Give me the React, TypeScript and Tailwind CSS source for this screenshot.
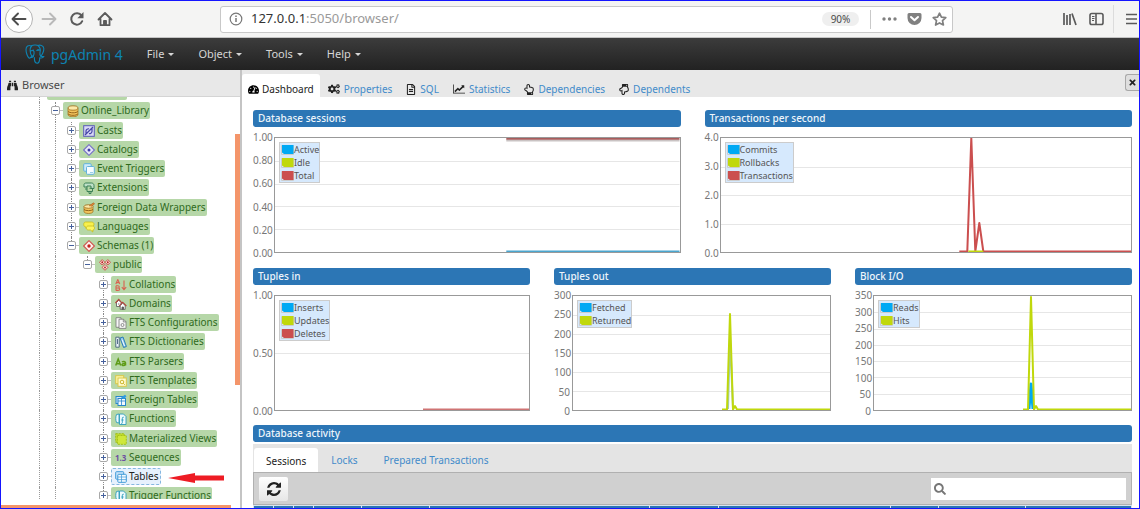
import React from "react";
import { FaBinoculars, FaTachometerAlt, FaCogs, FaRegFileAlt, FaRegHandPointUp, FaRegHandPointDown, FaSearch, FaTimes } from "react-icons/fa";

/* ---------- Browser chrome ---------- */

function ArrowIcon({ flip = false }: { flip?: boolean }) {
  return (
    <svg viewBox="0 0 16 16" className={flip ? "h-4 w-4 -scale-x-100" : "h-4 w-4"} fill="none" stroke="currentColor" strokeWidth="1.900" strokeLinecap="round" strokeLinejoin="round">
      <path d="M14.500 8H2M7 2.500 1.500 8 7 13.500" />
    </svg>
  );
}

function ReloadIcon() {
  return (
    <svg viewBox="0 0 16 16" className="h-4 w-4" fill="none" stroke="currentColor" strokeWidth="2">
      <path d="M13.200 10.200A5.700 5.700 0 1 1 12.600 4.600" strokeLinecap="round" />
      <path d="M14.500 1v6.200H8.300z" fill="currentColor" stroke="none" />
    </svg>
  );
}

function HomeIcon() {
  return (
    <svg viewBox="0 0 16 16" className="h-4 w-4" fill="none" stroke="currentColor" strokeWidth="1.8" strokeLinecap="round" strokeLinejoin="round">
      <path d="M1.500 8.500 8 2l6.500 6.500M3.500 8v6.200h9V8" />
      <path d="M6.600 14V9.500h2.800V14z" fill="currentColor" strokeWidth="1" />
    </svg>
  );
}

function BrowserBar() {
  return (
    <header className="flex h-[37px] shrink-0 items-center border-b border-[#c4c4c4] bg-[#f4f4f3] text-[#5b5b5b]">
      <div className="flex w-[219px] shrink-0 items-center pl-1">
        <button aria-label="Back" className="flex h-7 w-7 items-center justify-center rounded-full border border-[#b4b4b4] bg-white text-[#4d4d4d]"><ArrowIcon /></button>
        <button aria-label="Forward" className="ml-2 text-[#b9b9b9]"><ArrowIcon flip /></button>
        <button aria-label="Reload" className="ml-3"><ReloadIcon /></button>
        <button aria-label="Home" className="ml-3"><HomeIcon /></button>
      </div>
      <div className="flex h-[27px] min-w-0 flex-1 items-center rounded-[3px] border border-[#c8c8c8] bg-white pr-[5px] pl-2">
        <svg viewBox="0 0 14 14" className="h-[14px] w-[14px] shrink-0" fill="none" stroke="#777" strokeWidth="1.200">
          <circle cx="7" cy="7" r="5.800" />
          <path d="M7 6v4M7 3.600v1.300" strokeWidth="1.500" />
        </svg>
        <div className="ml-2 flex-1 text-[13px] whitespace-nowrap text-[#9a9a9a]"><span className="text-[#333]">127.0.0.1</span>:5050/browser/</div>
        <button className="h-[14px] w-[37px] rounded-full bg-[#efefef] text-[10px] leading-[14px] text-[#4a4a4a]">90%</button>
        <div className="ml-[11px] h-[19px] w-px bg-[#c9c9c9]" />
        <button aria-label="Page actions" className="ml-[11px]">
          <svg viewBox="0 0 15 14" className="h-[14px] w-[15px]" fill="#808080"><circle cx="2" cy="7" r="1.700" /><circle cx="7.500" cy="7" r="1.700" /><circle cx="13" cy="7" r="1.700" /></svg>
        </button>
        <button aria-label="Save to Pocket" className="ml-[10px]">
          <svg viewBox="0 0 15 14" className="h-[14px] w-[15px]"><path d="M2 1h11a1.500 1.500 0 0 1 1.500 1.500V6a7 7 0 0 1-14 0V2.500A1.500 1.500 0 0 1 2 1z" fill="#808080" /><path d="M4 5l3.500 3.300L11 5" fill="none" stroke="#fff" strokeWidth="2" strokeLinecap="round" strokeLinejoin="round" /></svg>
        </button>
        <button aria-label="Bookmark" className="ml-[10px]">
          <svg viewBox="0 0 15 14" className="h-[14px] w-[15px]" fill="none" stroke="#808080" strokeWidth="1.700" strokeLinejoin="round"><path d="M7.500 1.200l1.900 4 4.400.5-3.300 3 .9 4.300-3.900-2.100L3.600 13l.9-4.300-3.300-3 4.400-.5z" /></svg>
        </button>
      </div>
      <div className="flex h-full w-[186px] shrink-0 items-center justify-end text-[#5a5a5a]">
        <button aria-label="Library">
          <svg viewBox="0 0 15 14" className="h-[14px] w-[15px]" fill="none" stroke="currentColor" strokeWidth="1.700"><path d="M2 1v12M5 3v10M8 2v11M10 1.500l4 11.500" /></svg>
        </button>
        <button aria-label="Sidebars" className="ml-3">
          <svg viewBox="0 0 15 14" className="h-[14px] w-[15px]" fill="none" stroke="currentColor" strokeWidth="1.600"><rect x="1" y="1.500" width="13" height="11" rx="1.800" /><path d="M7 1.500v11" /><path d="M3 4.500h2.500M3 6.500h2.500M3 8.500h2" strokeWidth="1" /></svg>
        </button>
        <div className="ml-[9px] h-7 w-px bg-[#dcdcdc]" />
        <button aria-label="Menu" className="mr-[2px] ml-[11px]">
          <svg viewBox="0 0 12 14" className="h-[14px] w-3" stroke="currentColor" strokeWidth="1.700"><path d="M1 2.500h11M1 7h11M1 11.500h11" /></svg>
        </button>
      </div>
    </header>
  );
}

/* ---------- Application menu ---------- */

function ElephantLogo() {
  return (
    <svg viewBox="0 0 20 20" className="h-5 w-5" fill="none" stroke="currentColor" strokeWidth="1.100" strokeLinecap="round" strokeLinejoin="round">
      <path d="M6.500 2C3.500.7 1 2 1 5.500c0 3 1.500 7.500 3 8.500 1 .6 2-.8 2.800-1.800" />
      <path d="M6.500 2C8 1 11.500.7 13 1.500c2-.8 5.500-.3 5.800 3 .2 2.500-1.300 5.500-2.800 7.800 1 .5 2 .3 3 .2-1 1.300-3 1.600-4.300 1.200-.2 2.300.2 5.300-2.500 5.500-2.500.1-2.700-2-2.900-5.700" />
      <path d="M6.500 2C5 3.500 5 6 5.300 8c.2 2 .6 4 3.200 4.500M13 1.500c2 2 2.800 4.500 2 6.800-.4 1.300-.1 2.700 1 4M5.300 7.500c1-1.300 3-1.300 3.700 0 .4 1.500-.2 3.500-.8 5-.6.900-1.700 1-2.200.8M11.800 6.500c.8-.8 2.200-.7 3.300-.2" />
      <path d="M8 6.200h.3M13 6h.3" strokeWidth="1.400" />
    </svg>
  );
}

function MenuBar() {
  return (
    <nav className="flex h-8 shrink-0 items-center bg-linear-to-b from-[#3c3c3c] to-[#222] pl-6 text-[11px] text-[#d6d6d6]">
      <a href="#home" className="mr-3 flex items-center gap-[6px] text-[14px] text-[#0d83b2]"><ElephantLogo />pgAdmin 4</a>
      {["File", "Object", "Tools", "Help"].map((m) => (
        <button key={m} className="flex items-center gap-1 px-3">
          {m}
          <svg viewBox="0 0 6 3" className="h-[3px] w-[6px]" fill="currentColor"><path d="M0 0h6L3 3z" /></svg>
        </button>
      ))}
    </nav>
  );
}

/* ---------- Object tree ---------- */

const icon = {
  database: <g><path d="M1 3.500v6c0 1.300 2.200 2.300 5 2.300s5-1 5-2.300v-6z" fill="#f3c55d" stroke="#9c6a18" strokeWidth=".7" /><ellipse cx="6" cy="3" rx="5" ry="2.200" fill="#fbe9a9" stroke="#9c6a18" strokeWidth=".8" /><path d="M1 6.300c1.500 2 8.500 2 10 0M1 8.800c1.500 2 8.500 2 10 0" fill="none" stroke="#8a5a14" strokeWidth=".9" /></g>,
  cast: <g><rect x=".7" y=".7" width="10.600" height="10.600" fill="#d9d9f6" stroke="#5a5ab8" strokeWidth="1" /><path d="M3 8.500V5.800a2.500 2.500 0 0 1 3-2M9 3.500v3a2.500 2.500 0 0 1-3 2M2 10l8-8" fill="none" stroke="#4646a8" strokeWidth="1.200" /></g>,
  catalog: <g><path d="M6 .6 11.400 6 6 11.400.6 6z" fill="#e7e6fa" stroke="#7873c6" strokeWidth="1.100" /><circle cx="6" cy="6" r="1.500" fill="#3c3ca5" /></g>,
  event: <g><rect x=".7" y=".7" width="7.500" height="7.500" rx="1" fill="#cfeaf8" stroke="#62b2dc" /><rect x="3.500" y="3.500" width="7.800" height="7.800" rx="1" fill="#f7fcff" stroke="#62b2dc" /><path d="M7 9.500h3" stroke="#9bcde6" /></g>,
  extension: <g fill="none" stroke="#3d8157" strokeWidth="1"><path d="M1 5V2.500C1 1.500 2 1 3 1h5.500C10 1 11 2.200 11 3.500v3H8V4H4v1z" fill="#bfe0c8" /><path d="M4 5v4.500h5.500V6.300H6.500M6 9.500v2h2v-2M4 7H2" /></g>,
  wrapper: <g><path d="M1 4.500v5c0 1.200 2 2 4.500 2s4.500-.8 4.500-2v-5z" fill="#f3c55d" stroke="#9c6a18" strokeWidth=".7" /><ellipse cx="5.500" cy="4.500" rx="4.500" ry="1.800" fill="#fbe9a9" stroke="#9c6a18" strokeWidth=".8" /><path d="M1 7.500c1.500 1.500 7.500 1.500 9 0" fill="none" stroke="#8a5a14" strokeWidth=".9" /><path d="M6 4 10.500.800 11.500 2 8 4.500" fill="#e48b3a" stroke="#a85a18" strokeWidth=".6" /></g>,
  language: <g><path d="M2.500 1h6C10 1 11 2 11 3.200S10 6 8.500 6H5L3 7.500V6C1.500 5.800.7 5 .7 3.500S1.500 1 2.500 1z" fill="#f8f04c" stroke="#c6bb1d" strokeWidth=".8" /><path d="M5 5h4.500c1.200 0 2 .8 2 2s-.7 2-1.700 2v2L7.500 9H5.300C4 9 3.300 8 3.300 7S4 5 5 5z" fill="#fcf65f" stroke="#c6bb1d" strokeWidth=".8" /></g>,
  schema: <g><path d="M6 .6 11.400 6 6 11.400.6 6z" fill="#fff1ef" stroke="#cf5750" strokeWidth="1.100" /><circle cx="6" cy="6" r="1.700" fill="#c5201c" /></g>,
  public: <g fill="#fbe3e1" stroke="#cb4540" strokeWidth=".9"><path d="M3.200.6 5.900 3.300 3.200 6 .5 3.300zM8.800.6l2.700 2.700L8.800 6 6.100 3.300zM6 5.500 8.900 8.400 6 11.300 3.100 8.400z" /><path d="M3.200 3.200v.2M8.800 3.200v.2M6 8.300v.2" stroke="#b81e1a" strokeWidth="1.800" strokeLinecap="round" /></g>,
  collation: <g fill="none" stroke="#d9604f" strokeWidth="1.100"><path d="M.8 5 2.800.6 4.800 5M1.500 3.600h2.600M1 6.800v4.600M1 6.800h1.800c2 0 2 2.200 0 2.200H1h2c2.300 0 2.300 2.400 0 2.400H1M9 1.500v9M6.800 8.200 9 10.600l2.200-2.400" /></g>,
  domain: <g strokeWidth=".8" stroke="#555"><path d="M1.500 4.500V8.500H6V4.500L3.800 2.200z" fill="#fff" /><path d="M.4 5 3.800 1.400 7 5" fill="none" stroke="#b4433c" strokeWidth="1.100" /><path d="M5.200 7.500v3.800h5V7.500L7.700 5.200z" fill="#fff" /><path d="M4.200 8 7.700 4.200 11.400 8" fill="none" stroke="#b4433c" strokeWidth="1.100" /><path d="M7 9h1.500v2.300H7zM3 6h1.400" fill="#666" /></g>,
  config: <g stroke="#777" strokeWidth=".8" fill="#f7f7f7"><path d="M1 .700h5v9.600H1z" /><path d="M4 2.200h4.500l2.500 2.500v6.700H4z" /><circle cx="7.500" cy="8" r="1.500" fill="none" /><path d="M8.300 2.200v2.700H11" fill="none" /></g>,
  dictionary: <g strokeWidth=".9"><path d="M.8 1.200h3.400v10H.8z" fill="#eef5fb" stroke="#44617c" /><path d="M2.500 3v5" stroke="#44617c" /><path d="m5 2 3-1 3.400 9.500-2.800 1z" fill="#8fc7ee" stroke="#2476b1" /><path d="m7 3.500 2.500 6.500" stroke="#fff" /></g>,
  parser: <g fill="none" stroke="#5d9b16" strokeWidth="1.500"><path d="M.7 9.500 3.200 3l2.500 6.500M1.500 7.700h3.400M7 6c1-.9 3.500-.9 3.500.8v2.700M10.500 7.500c-2-.1-3.500.1-3.500 1.100 0 1.300 2.500 1.200 3.500 0" /></g>,
  template: <g><rect x=".7" y=".7" width="8" height="8" fill="#fdf7a8" stroke="#d9c748" /><rect x="3" y="3" width="8.300" height="8.300" fill="#fffbd0" stroke="#d9c748" /><circle cx="7" cy="7" r="1.800" fill="none" stroke="#cdb62d" /><path d="m8.300 8.300 1.500 1.500" stroke="#cdb62d" /></g>,
  foreign: <g><rect x="1" y="2.500" width="7.500" height="7" fill="#cfe7fb" stroke="#2887cb" /><rect x="3" y="4.500" width="7.500" height="7" fill="#f2f9ff" stroke="#2887cb" /><path d="M3 7h7.500M6.500 4.500v7" stroke="#2887cb" strokeWidth=".8" /><path d="M6 3.500 10 .700l1.500 1.500L9 5z" fill="#2f9be2" /></g>,
  func: <g fill="#eefafd" stroke="#2d9cbc" strokeWidth=".9"><path d="M1.500 1.500C.5 4 .5 7 1.500 9.500L4 10V1z" /><path d="M4.500 1h4L11 3.500v8H4.500z" /><path d="M8.800 4.300c-1.300-.5-1.500.2-1.500 1.500v4c0 .8-.8 1-1.300.7M6.300 7h2.300" fill="none" /></g>,
  mview: <g><rect x=".7" y=".7" width="8.500" height="8.500" fill="#c2dd2f" stroke="#9fbd16" strokeDasharray="2 1" /><rect x="2.500" y="2.500" width="8.800" height="8.800" fill="#cfe83a" stroke="#a5c31a" strokeDasharray="2 1" /></g>,
  table: <g><rect x=".7" y=".7" width="8" height="7.500" rx=".8" fill="#c8e3fa" stroke="#3f9ad8" /><rect x="2.800" y="3.300" width="8.500" height="8" rx=".8" fill="#f4faff" stroke="#3f9ad8" /><path d="M2.800 6h8.500M2.800 8.600h8.500M6.500 3.300v8" stroke="#3f9ad8" strokeWidth=".7" /></g>,
};

type IconName = keyof typeof icon | "sequence";
type Guide = "line" | "none";
interface Node { label: string; icon: IconName; guides: Guide[]; open?: boolean; last?: boolean; selected?: boolean }

const rootGuides: Guide[] = ["line"];
const databaseGuides: Guide[] = ["line", "line"];
const schemaGuides: Guide[] = ["line", "line", "none"];
const objectGuides: Guide[] = ["line", "line", "none", "none"];

const nodes: Node[] = [
  { label: "Online_Library", icon: "database", guides: rootGuides, open: true },
  { label: "Casts", icon: "cast", guides: databaseGuides },
  { label: "Catalogs", icon: "catalog", guides: databaseGuides },
  { label: "Event Triggers", icon: "event", guides: databaseGuides },
  { label: "Extensions", icon: "extension", guides: databaseGuides },
  { label: "Foreign Data Wrappers", icon: "wrapper", guides: databaseGuides },
  { label: "Languages", icon: "language", guides: databaseGuides },
  { label: "Schemas (1)", icon: "schema", guides: databaseGuides, open: true, last: true },
  { label: "public", icon: "public", guides: schemaGuides, open: true, last: true },
  { label: "Collations", icon: "collation", guides: objectGuides },
  { label: "Domains", icon: "domain", guides: objectGuides },
  { label: "FTS Configurations", icon: "config", guides: objectGuides },
  { label: "FTS Dictionaries", icon: "dictionary", guides: objectGuides },
  { label: "FTS Parsers", icon: "parser", guides: objectGuides },
  { label: "FTS Templates", icon: "template", guides: objectGuides },
  { label: "Foreign Tables", icon: "foreign", guides: objectGuides },
  { label: "Functions", icon: "func", guides: objectGuides },
  { label: "Materialized Views", icon: "mview", guides: objectGuides },
  { label: "Sequences", icon: "sequence", guides: objectGuides },
  { label: "Tables", icon: "table", guides: objectGuides, selected: true },
  { label: "Trigger Functions", icon: "func", guides: objectGuides },
];

function GuideCell({ kind }: { kind: Guide }) {
  return <span className={kind === "line" ? "ml-2 w-2 shrink-0 border-l border-dotted border-[#9a9a9a]" : "w-4 shrink-0"} />;
}

function TreeRow({ node }: { node: Node }) {
  return (
    <li className="flex h-[19px] pl-[30px] nth-[4n+1]:h-5">
      {node.guides.map((g, i) => <GuideCell key={i} kind={g} />)}
      <span className="relative w-4 shrink-0">
        <span className={node.last ? "absolute top-0 left-2 h-2 border-l border-dotted border-[#8a8a8a]" : "absolute inset-y-0 left-2 border-l border-dotted border-[#8a8a8a]"} />
        <span className="absolute top-2 right-0 w-1 border-t border-[#c0c0c0]" />
        <button aria-label={node.open ? `Collapse ${node.label}` : `Expand ${node.label}`} className="absolute top-1 left-1 flex h-[9px] w-[9px] items-center justify-center rounded-[2px] border border-[#a8a8a8] bg-white">
          <svg viewBox="0 0 5 5" className="h-[5px] w-[5px] shrink-0" stroke="#46619c" strokeWidth="1"><path d={node.open ? "M0 2.500h5" : "M0 2.500h5M2.500 0v5"} /></svg>
        </button>
      </span>
      <a href="#node" className={node.selected
        ? "flex h-[17px] items-center gap-[2px] rounded-[2px] border border-dashed border-[#86b7e0] bg-[#e7f1fd] pr-px pl-[3px] text-[10px] whitespace-nowrap text-[#222]"
        : "flex h-[17px] items-center gap-[2px] rounded-[2px] bg-[#b6d7a8] pr-px pl-1 text-[10px] whitespace-nowrap text-[#2f6a1c]"}>
        {node.icon === "sequence"
          ? <span className="w-3 text-[8px] leading-3 font-bold text-[#6d4fa0]">1.3</span>
          : <svg viewBox="0 0 12 12" className="h-3 w-3 shrink-0">{icon[node.icon]}</svg>}
        {node.label}
      </a>
      {node.selected && (
        <svg viewBox="0 0 56 10" className="ml-[7px] h-[10px] w-14 shrink-0 self-center" fill="#ee1c24"><path d="M0 5 27 0v2.500h29v5H27V10z" /></svg>
      )}
    </li>
  );
}

function Sidebar() {
  return (
    <aside className="flex w-[239px] shrink-0 flex-col bg-white">
      <h2 className="flex h-[27px] shrink-0 items-center gap-1 border-b border-[#d4d4d4] bg-[#e8e8e8] pt-[5px] pl-[6px] text-[11px] text-[#4a4a4a]">
        <FaBinoculars className="h-[11px] w-[11px] text-[#222]" />Browser
      </h2>
      <div className="flex min-h-0 flex-1">
        <div className="min-w-0 flex-1 overflow-hidden">
          <div className="flex h-[5px] pl-[30px]">
            <GuideCell kind="line" />
            <span className="h-[3px] w-20 rounded-b-[2px] bg-[#b6d7a8]" />
          </div>
          <ul>{nodes.map((n) => <TreeRow key={n.label} node={n} />)}</ul>
        </div>
        <div className="w-[5px] pt-[37px]"><div className="h-[251px] bg-[#f4956a]" /></div>
      </div>
      <div className="flex h-[9px] shrink-0 items-end"><div className="h-[3px] w-[230px] bg-[#f4956a]" /></div>
    </aside>
  );
}

/* ---------- Dashboard ---------- */

function LineChartIcon({ className }: { className: string }) {
  return <svg viewBox="0 0 2048 1792" className={className} fill="currentColor"><path d="M2048 1536v128h-2048v-1536h128v1408h1920zm-128-1248v435q0 21-19.500 29.500t-35.500-7.500l-121-121-633 633q-10 10-23 10t-23-10l-233-233-416 416-192-192 585-585q10-10 23-10t23 10l233 233 464-464-121-121q-16-16-7.500-35.500t29.500-19.500h435q14 0 23 9t9 23z" /></svg>;
}

function RefreshIcon() {
  return <svg viewBox="0 128 1536 1536" className="h-[14px] w-[14px]" fill="currentColor"><path d="M1511 1056q0 5-1 7-64 268-268 434.500T764 1664q-146 0-282.500-55T238 1452l-129 129q-19 19-45 19t-45-19-19-45v-448q0-26 19-45t45-19h448q26 0 45 19t19 45-19 45l-137 137q71 66 161 102t187 36q134 0 250-65t186-179q11-17 53-117 8-23 30-23h192q13 0 22.500 9.500t9.500 22.500zm25-800v448q0 26-19 45t-45 19h-448q-26 0-45-19t-19-45 19-45l138-138Q969 384 768 384q-134 0-250 65T332 628q-11 17-53 117-8 23-30 23H50q-13 0-22.500-9.500T18 736v-7q65-268 270-434.500T768 128q146 0 284 55.500T1297 340l130-129q19-19 45-19t45 19 19 45z" /></svg>;
}

const tabs = [
  { label: "Properties", Icon: FaCogs, size: "h-3 w-3" },
  { label: "SQL", Icon: FaRegFileAlt, size: "h-[11px] w-[10px]" },
  { label: "Statistics", Icon: LineChartIcon, size: "h-3 w-3" },
  { label: "Dependencies", Icon: FaRegHandPointUp, size: "h-[11px] w-[10px]" },
  { label: "Dependents", Icon: FaRegHandPointDown, size: "h-[11px] w-[10px]" },
];

function TabBar() {
  return (
    <div className="flex h-[27px] shrink-0 items-end bg-[#e8e8e8] text-[10px] text-[#428bca]">
      <div role="tablist" className="flex h-full items-end">
        <button role="tab" className="flex h-[23px] items-center gap-[3px] rounded-t-[3px] bg-white pt-2 pr-[6px] pl-[6px] text-[#222]">
          <FaTachometerAlt className="h-[11px] w-[11px] text-black" />Dashboard
        </button>
        {tabs.map(({ label, Icon, size }) => (
          <button role="tab" key={label} className="flex h-[23px] items-center gap-1 pt-[7px] pr-[6px] pl-2">
            <Icon className={size + " text-[#222]"} />{label}
          </button>
        ))}
      </div>
      <button aria-label="Close" className="mb-[6px] ml-auto flex h-[17px] w-[14px] items-center justify-center rounded-l-[3px] border border-r-0 border-[#a8a8a8] bg-[#dedede] text-[#222]"><FaTimes className="h-[9px] w-[9px]" /></button>
    </div>
  );
}

const BLUE = "#00a9f4";
const LIME = "#c0d80c";
const RED = "#cb4f4f";

interface Series { points: string; color: string; width?: number }
interface ChartProps { title: string; ticks: string[]; axis: string; view: [number, number]; legend: [string, string][]; series: Series[] }

function SectionTitle({ children }: { children: React.ReactNode }) {
  return <h3 className="h-[17px] rounded-[3px] bg-[#2c76b5] px-[5px] text-[10px] leading-[17px] font-medium text-[#eef5fb]">{children}</h3>;
}

function Chart({ title, ticks, axis, view, legend, series }: ChartProps) {
  const [w, h] = view;
  return (
    <section className="min-w-0">
      <SectionTitle>{title}</SectionTitle>
      <div className="mt-[10px] flex h-[116px]">
        <div className={axis + " -my-[5px] flex shrink-0 flex-col justify-between pr-[2px] text-right text-[10px] leading-[10px] text-[#777]"}>
          {ticks.map((t) => <span key={t}>{t}</span>)}
        </div>
        <div className="relative min-w-0 flex-1 border border-[#999] bg-white">
          <svg viewBox={`0 0 ${w} ${h}`} preserveAspectRatio="none" className="absolute inset-0 h-full w-full">
            {ticks.slice(1, -1).map((t, i) => {
              const y = Math.round(((i + 1) * h) / (ticks.length - 1)) + 0.5;
              return <path key={t} d={`M0 ${y}H${w}`} stroke="#e6e6e6" />;
            })}
            {series.map((s, i) => <polyline key={i} points={s.points} fill="none" stroke={s.color} strokeWidth={s.width ?? 2} strokeLinejoin="round" />)}
          </svg>
          <ul className="absolute top-1 left-1 border border-[#ccc] bg-[#d6e9fd] text-[9px] leading-[13px] text-[#555]">
            {legend.map(([name, color]) => (
              <li key={name} className="flex h-[13px] items-center pl-px">
                <svg viewBox="0 0 13 10" className="h-[10px] w-[13px]"><path d="M.5.5h12v9H.5z" fill="none" stroke="#ccc" /><path d="M1 0h11.500v9H3L1 7.500z" fill={color} /></svg>
                {name}
              </li>
            ))}
          </ul>
        </div>
      </div>
    </section>
  );
}

const columns = ["w-5", "w-5", "w-5", "w-12", "w-[67px]", "w-[220px]", "w-[68px]", "w-[172px]", "w-12", "w-[86px]", "w-[106px]"];

function Activity() {
  return (
    <section className="mt-[14px]">
      <SectionTitle>Database activity</SectionTitle>
      <div role="tablist" className="mt-[2px] flex h-[28px] items-end bg-[#e4e4e4] pl-px text-[10px] text-[#428bca]">
        <button role="tab" className="h-6 rounded-t-[3px] bg-white px-3 pt-[2px] text-[#222]">Sessions</button>
        <button role="tab" className="h-6 px-[13px]">Locks</button>
        <button role="tab" className="h-6 px-[13px]">Prepared Transactions</button>
      </div>
      <div className="flex h-[33px] items-center justify-between border border-[#b0b0b0] bg-[#d0d0d0] px-[5px]">
        <button aria-label="Refresh" className="flex h-6 w-[29px] items-center justify-center rounded-[2px] bg-linear-to-b from-white to-[#e6e6e6] text-[#222]"><RefreshIcon /></button>
        <label className="flex h-[22px] w-[195px] items-center gap-1 bg-white pl-[3px]">
          <FaSearch className="h-3 w-3 shrink-0 text-[#777]" />
          <input type="search" aria-label="Search" className="min-w-0 flex-1 bg-transparent text-[11px] outline-none" />
        </label>
      </div>
      <table className="w-full table-fixed border-collapse bg-[#2c76b5]">
        <thead>
          <tr>{columns.map((c, i) => <th key={i} className={c + " h-5 border border-[#d8e4ee]"} />)}</tr>
        </thead>
      </table>
    </section>
  );
}

function Dashboard() {
  return (
    <main className="flex min-w-0 flex-1 flex-col overflow-hidden border-l-2 border-[#c4c4c4] bg-white">
      <TabBar />
      <div className="min-h-0 flex-1 overflow-hidden pt-[13px] pr-[7px] pl-[11px]">
        <div className="grid grid-cols-2 gap-6">
          <Chart title="Database sessions" axis="w-[21px]" view={[404, 114]} ticks={["1.00", "0.80", "0.60", "0.40", "0.20", "0.00"]}
            legend={[["Active", BLUE], ["Idle", LIME], ["Total", RED]]}
            series={[{ points: "231,2.5 404,2.5", color: "#c9c3c3", width: 2 }, { points: "231,0.7 404,0.7", color: "#a85c5c" }, { points: "231,113.5 404,113.5", color: "#4aa6cf" }]} />
          <Chart title="Transactions per second" axis="w-[15px]" view={[410, 114]} ticks={["4.0", "3.0", "2.0", "1.0", "0.0"]}
            legend={[["Commits", BLUE], ["Rollbacks", LIME], ["Transactions", RED]]}
            series={[{ points: "238,113.5 246,113.5 250,0 254,113.5 258,85 262,113.5 410,113.5", color: RED }, { points: "247,113.5 262,113.5", color: LIME }]} />
        </div>
        <div className="mt-[15px] grid grid-cols-3 gap-6">
          <Chart title="Tuples in" axis="w-[21px]" view={[254, 114]} ticks={["1.00", "0.50", "0.00"]}
            legend={[["Inserts", BLUE], ["Updates", LIME], ["Deletes", RED]]}
            series={[{ points: "148,113.5 254,113.5", color: "#cf7474" }]} />
          <Chart title="Tuples out" axis="w-[18px]" view={[257, 114]} ticks={["300", "250", "200", "150", "100", "50", "0"]}
            legend={[["Fetched", BLUE], ["Returned", LIME]]}
            series={[{ points: "155,113 157,40 160,113", color: "#9fc9c0", width: 2 }, { points: "149,113.5 154,113.5 157,18 160,113.5 162,110 164,113.5 257,113.5", color: LIME }]} />
          <Chart title="Block I/O" axis="w-[18px]" view={[257, 114]} ticks={["350", "300", "250", "200", "150", "100", "50", "0"]}
            legend={[["Reads", BLUE], ["Hits", LIME]]}
            series={[{ points: "155,113 157,88 159,113", color: BLUE, width: 3 }, { points: "149,113.5 154,113.5 157,1 160,113.5 162,110 164,113.5 257,113.5", color: LIME }]} />
        </div>
        <Activity />
      </div>
    </main>
  );
}

export default function App() {
  return (
    <div className="flex h-screen flex-col overflow-hidden border border-[#1515ff] bg-white font-['Noto_Sans',sans-serif]">
      <BrowserBar />
      <MenuBar />
      <div className="flex min-h-0 flex-1">
        <Sidebar />
        <Dashboard />
      </div>
    </div>
  );
}
